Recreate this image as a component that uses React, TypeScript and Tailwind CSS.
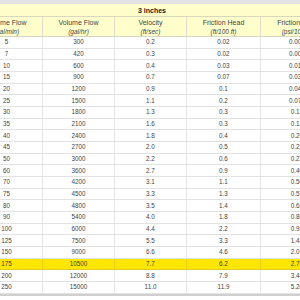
import React from "react";

const rows: string[][] = [
  ["5", "300", "0.2", "0.02", "0.009"],
  ["7", "420", "0.3", "0.02", "0.009"],
  ["10", "600", "0.4", "0.03", "0.013"],
  ["15", "900", "0.7", "0.07", "0.030"],
  ["20", "1200", "0.9", "0.1", "0.043"],
  ["25", "1500", "1.1", "0.2", "0.070"],
  ["30", "1800", "1.3", "0.3", "0.13"],
  ["35", "2100", "1.6", "0.3", "0.13"],
  ["40", "2400", "1.8", "0.4", "0.20"],
  ["45", "2700", "2.0", "0.5", "0.23"],
  ["50", "3000", "2.2", "0.6", "0.27"],
  ["60", "3600", "2.7", "0.9", "0.40"],
  ["70", "4200", "3.1", "1.1", "0.50"],
  ["75", "4500", "3.3", "1.3", "0.57"],
  ["80", "4800", "3.5", "1.4", "0.62"],
  ["90", "5400", "4.0", "1.8", "0.80"],
  ["100", "6000", "4.4", "2.2", "0.95"],
  ["125", "7500", "5.5", "3.3", "1.43"],
  ["150", "9000", "6.6", "4.6", "2.01"],
  ["175", "10500", "7.7", "6.2", "2.70"],
  ["200", "12000", "8.8", "7.9", "3.44"],
  ["250", "15000", "11.0", "11.9", "5.20"],
];

const headers: [string, string][] = [
  ["Volume Flow", "(gal/min)"],
  ["Volume Flow", "(gal/hr)"],
  ["Velocity", "(ft/sec)"],
  ["Friction Head", "(ft/100 ft)"],
  ["Friction Loss", "(psi/100 ft)"],
];

export default function App() {
  return (
    <div
      className="w-[300px] h-[300px] overflow-hidden bg-white text-[#333]"
      style={{ fontFamily: '"Liberation Sans", Arial, sans-serif' }}
    >
      <div className="h-[4px] bg-[#e3e3e3]" />
      <div className="ml-[-29px] w-[362px]">
        <div className="h-[13px] bg-[#ffffcc] border-b border-[#d8d8c0] flex items-center justify-center text-[7px] font-bold leading-none text-[#222]">
          3 inches
        </div>
        <div className="grid grid-cols-[72px_72px_72px_74px_72px] h-[20px] bg-[#ffffcc] border-b border-[#d6d6c4]">
          {headers.map((h, i) => (
            <div
              key={i}
              className={`flex flex-col items-center justify-center leading-[9px] ${
                i < 4 ? "border-r border-[#dcdcc8]" : ""
              }`}
            >
              <span className="text-[7px] text-[#444]">{h[0]}</span>
              <span className="text-[6.5px] italic text-[#444]">{h[1]}</span>
            </div>
          ))}
        </div>
        {rows.map((r, ri) => (
          <div
            key={ri}
            className={`grid grid-cols-[72px_72px_72px_74px_72px] h-[11.68px] border-b ${
              r[0] === "175"
                ? "bg-[#ffe600] border-[#e0cc20]"
                : "bg-white border-[#e2e2e2]"
            }`}
          >
            {r.map((c, ci) => (
              <div
                key={ci}
                className={`flex items-center justify-center text-[6.3px] leading-none text-[#444] ${
                  ci < 4
                    ? r[0] === "175"
                      ? "border-r border-[#e8d420]"
                      : "border-r border-[#e6e6e6]"
                    : ""
                }`}
              >
                {c}
              </div>
            ))}
          </div>
        ))}
        <div className="h-[2px] bg-[#cfcfcf]" />
      </div>
    </div>
  );
}
